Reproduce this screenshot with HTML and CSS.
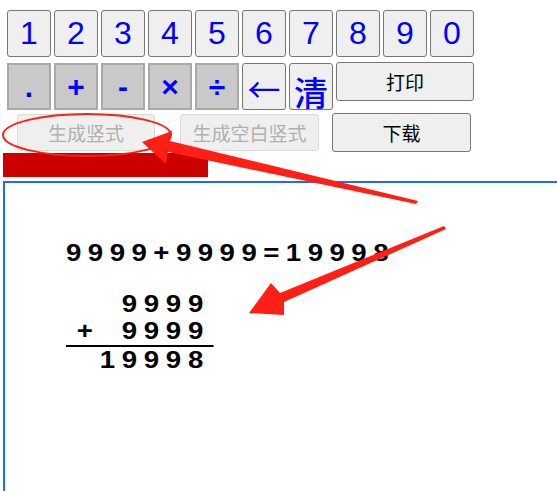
FILE: index.html
```html
<!DOCTYPE html>
<html>
<head>
  <title>竖式计算</title>
  <meta charset="UTF-8">
  <link rel="stylesheet" href="styles.css">
</head>
<body>
  <div class="keys">
    <div class="row">
      <button class="key">1</button>
      <button class="key">2</button>
      <button class="key">3</button>
      <button class="key">4</button>
      <button class="key">5</button>
      <button class="key">6</button>
      <button class="key">7</button>
      <button class="key">8</button>
      <button class="key">9</button>
      <button class="key">0</button>
    </div>
    <div class="row">
      <button class="key op">.</button>
      <button class="key op">+</button>
      <button class="key op">-</button>
      <button class="key op">×</button>
      <button class="key op">÷</button>
      <button class="key big arrow">←</button>
      <button class="key big clear">清</button>
      <button class="wide">打印</button>
    </div>
    <div class="row actions">
      <button class="wide" disabled>生成竖式</button>
      <button class="wide blank" disabled>生成空白竖式</button>
      <button class="wide down">下载</button>
    </div>
  </div>
  <div class="redbar"></div>
  <div class="paper">
    <div class="equation">9999+9999=19998</div>
    <div class="vertical">
      <div class="line">9999</div>
      <div class="line operand"><span>+</span><span>9999</span></div>
      <div class="line">19998</div>
    </div>
  </div>

  <svg class="marks" width="557" height="491" viewBox="0 0 557 491">
    <ellipse cx="87" cy="135" rx="84" ry="21" fill="none" stroke="#ff1f14" stroke-width="2"/>
    <polygon fill="#ff1f14" points="418,201 170,141 172,131 142,142 166,164 168,152 416,204"/>
    <polygon fill="#ff1f14" points="444,226 280,293 271,283 249,313 284,315 284,302 446,229"/>
  </svg>
</body>
</html>
```

FILE: styles.css
```css
html {
  overflow: hidden;
}
body {
  margin: 0;
  font-family: "Liberation Sans", Arial, sans-serif;
  position: relative;
  height: 491px;
  overflow: hidden;
}
.keys {
  padding: 10px 0 0 7px;
}
.row {
  display: flex;
  gap: 3px;
  align-items: flex-start;
  margin-bottom: 6px;
}
button {
  margin: 0;
  padding: 0;
  font-family: "Liberation Sans", "Noto Sans CJK SC", sans-serif;
  background: #efefef;
  border: 1px solid #767676;
  border-radius: 3px;
}
.key {
  width: 44px;
  height: 47px;
  font-size: 32px;
  color: #0000ff;
}
.key.op {
  background: #c9c9c9;
  border: 2px solid #a9a9a9;
  border-radius: 0;
  font-weight: bold;
  font-size: 30px;
}
.key.big {
  font-family: "Noto Sans CJK SC", sans-serif;
  overflow: visible;
  line-height: 1;
}
.key.arrow {
  font-size: 33px;
  padding-top: 4px;
}
.key.clear {
  font-size: 34px;
  font-weight: 500;
  padding-top: 10px;
}
.wide {
  width: 138px;
  height: 39px;
  font-size: 19px;
  color: #000;
  font-family: "Noto Sans CJK SC", sans-serif;
  margin-top: -1px;
}
.wide:disabled {
  color: #b0b0b0;
  border-color: #dadada;
  height: 37px;
  margin-top: 0;
}
.actions {
  margin-top: -2px;
  margin-left: 10px;
  gap: 25px;
}
.actions .down {
  margin-left: -12px;
  width: 139px;
  margin-top: -1px;
}
.actions .blank {
  width: 139px;
}
.redbar {
  margin: -5px 0 0 3px;
  width: 205px;
  height: 24px;
  background: #cc0000;
}
.paper {
  margin: 4px -20px 0 3px;
  height: 260px;
  border: 2px solid #1a6cff;
  padding: 58px 0 0 61px;
  font-weight: bold;
  font-size: 23px;
}
.equation {
  width: 270px;
  letter-spacing: 5.4px;
  line-height: 25px;
  transform: scaleX(1.2);
  transform-origin: left;
}
.vertical {
  margin-top: 25px;
  width: 123px;
  text-align: right;
  letter-spacing: 5.6px;
  transform: scaleX(1.2);
  transform-origin: left;
}
.line {
  line-height: 27px;
  padding-right: 3px;
}
.operand {
  display: flex;
  justify-content: space-between;
  padding-left: 9px;
  border-bottom: 2px solid #000;
}
.marks {
  position: absolute;
  left: 0;
  top: 0;
  pointer-events: none;
}
```
